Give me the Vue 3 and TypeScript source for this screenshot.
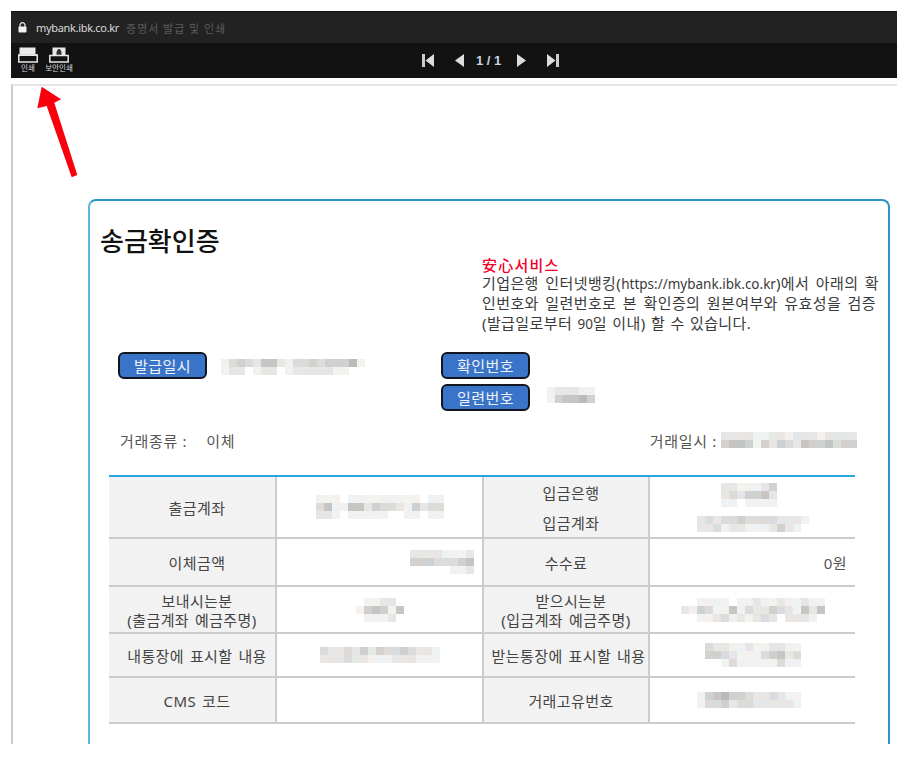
<script setup lang="ts">
type BlurData = { rows: string[] };

const tints = [
  [0, 0, 0],
  [3, 0, -2],
  [-2, 1, 4],
  [0, 2, 0],
  [2, -1, -1],
];

const shade = (ch: string, i: number): string => {
  const level = parseInt(ch, 10);
  if (level === 0) return "transparent";
  const base = 252 - level * 11;
  const t = tints[i % tints.length];
  return `rgb(${base + t[0]},${base + t[1]},${base + t[2]})`;
};

const cells = (d: BlurData) =>
  d.rows.flatMap((r, y) => r.split("").map((c, x) => ({ key: `${x}-${y}`, bg: shade(c, x * 3 + y) })));

const cols = (d: BlurData) => `repeat(${d.rows[0].length}, 8px)`;

const issued: BlurData = { rows: ["134325521334344461", "122012201222221100"] };
const serial: BlurData = { rows: ["122211", "145564"] };
const tradeAt: BlurData = { rows: ["22221122122212222", "45541424325445344"] };

const b: Record<string, BlurData> = {
  acct: { rows: ["1110111111111011", "3511552433214233", "2210111110011011"] },
  amount: { rows: ["22221112", "44433345", "00000112"] },
  sender: { rows: ["011220", "145415", "011120"] },
  myMemo: { rows: ["322324243343221", "222322111222111"] },
  bank: { rows: ["22111240", "23244520", "11011110"] },
  inAcct: { rows: ["23233433332221", "22312211124210"] },
  receiver: { rows: ["001111011211211211", "214311513224321525", "001123121232022210"] },
  theirMemo: { rows: ["322112112211", "443211134523", "001311111311"] },
  txId: { rows: ["14564432232110", "13342332222210"] },
};
</script>

<template>
  <div class="page">
    <div class="chrome">
      <div class="address">
        <svg class="lock" viewBox="0 0 9 11" width="9" height="11">
          <path d="M2 5V3.200a2.500 2.500 0 0 1 5 0V5" fill="none" stroke="#eee" stroke-width="1.2" />
          <rect x="0.5" y="4.6" width="8" height="6" rx="1" fill="#f2f2f2" />
        </svg>
        <span class="host">mybank.ibk.co.kr</span>
        <span class="doc-title">증명서 발급 및 인쇄</span>
      </div>
      <div class="toolbar">
        <div class="tools">
          <div class="tool first">
            <svg viewBox="0 0 20 16" width="20" height="16">
              <rect x="1.500" y="0.5" width="16" height="7" fill="#e8e8e8" />
              <rect x="0.8" y="8" width="18.400" height="7" fill="none" stroke="#e8e8e8" stroke-width="1.5" />
              <rect x="0.5" y="7.500" width="19" height="1.500" fill="#e8e8e8" />
            </svg>
            <span>인쇄</span>
          </div>
          <div class="tool second">
            <svg viewBox="0 0 20 16" width="20" height="16">
              <rect x="3.500" y="0.5" width="13" height="7.500" fill="#e8e8e8" />
              <path d="M7.500 8V5l1.500-3h2l1.500 3v3z" fill="#333" />
              <rect x="0.8" y="8.500" width="18.400" height="6.500" fill="none" stroke="#e8e8e8" stroke-width="1.5" />
            </svg>
            <span>보안인쇄</span>
          </div>
        </div>
        <div class="pager">
          <svg viewBox="0 0 12 13" width="12" height="13">
            <rect x="0" y="0" width="3" height="13" fill="#ccc" />
            <path d="M12 0v13L3.500 6.500z" fill="#ddd" />
          </svg>
          <svg class="prev" viewBox="0 0 10 13" width="10" height="13">
            <path d="M10 0v13L1 6.500z" fill="#ddd" />
          </svg>
          <span class="count">1 / 1</span>
          <svg class="next" viewBox="0 0 10 13" width="10" height="13">
            <path d="M0 0v13l9-6.500z" fill="#ddd" />
          </svg>
          <svg class="last" viewBox="0 0 12 13" width="12" height="13">
            <path d="M0 0v13l8.500-6.500z" fill="#ddd" />
            <rect x="9" y="0" width="3" height="13" fill="#ccc" />
          </svg>
        </div>
      </div>
    </div>

    <div class="sheet">
      <div class="card">
        <h1 class="title">송금확인증</h1>
        <div class="notice">
          <div class="notice-head">安心서비스</div>
          <div>기업은행 인터넷뱅킹(<span class="url">https://mybank.ibk.co.kr</span>)에서 아래의 확</div>
          <div>인번호와 일련번호로 본 확인증의 원본여부와 유효성을 검증</div>
          <div class="notice-last">(발급일로부터 <span class="url">90</span>일 이내) 할 수 있습니다.</div>
        </div>

        <div class="meta">
          <div class="meta-left">
            <span class="pill">발급일시</span>
            <div class="blur issued" :style="{ gridTemplateColumns: cols(issued) }">
              <i v-for="c in cells(issued)" :key="c.key" :style="{ background: c.bg }"></i>
            </div>
          </div>
          <div class="meta-right">
            <span class="pill">확인번호</span>
            <div class="serial-row">
              <span class="pill">일련번호</span>
              <div class="blur serial" :style="{ gridTemplateColumns: cols(serial) }">
                <i v-for="c in cells(serial)" :key="c.key" :style="{ background: c.bg }"></i>
              </div>
            </div>
          </div>
        </div>

        <div class="trade">
          <div class="trade-kind"><span>거래종류 :</span><span class="kind-value">이체</span></div>
          <div class="trade-at">
            <span>거래일시 :</span>
            <div class="blur" :style="{ gridTemplateColumns: cols(tradeAt) }">
              <i v-for="c in cells(tradeAt)" :key="c.key" :style="{ background: c.bg }"></i>
            </div>
          </div>
        </div>

        <table class="detail">
          <colgroup>
            <col class="c-th" /><col class="c-td" /><col class="c-th" /><col class="c-td" />
          </colgroup>
          <tbody>
            <tr class="r1">
              <th class="nudge">출금계좌</th>
              <td><div class="blur" :style="{ gridTemplateColumns: cols(b.acct) }"><i v-for="c in cells(b.acct)" :key="c.key" :style="{ background: c.bg }"></i></div></td>
              <th class="second-th stacked nudge"><div>입금은행</div><div>입금계좌</div></th>
              <td class="stack-cell">
                <div class="blur" :style="{ gridTemplateColumns: cols(b.bank) }"><i v-for="c in cells(b.bank)" :key="c.key" :style="{ background: c.bg }"></i></div>
                <div class="blur" :style="{ gridTemplateColumns: cols(b.inAcct) }"><i v-for="c in cells(b.inAcct)" :key="c.key" :style="{ background: c.bg }"></i></div>
              </td>
            </tr>
            <tr class="r2">
              <th class="nudge">이체금액</th>
              <td class="right"><div class="blur" :style="{ gridTemplateColumns: cols(b.amount) }"><i v-for="c in cells(b.amount)" :key="c.key" :style="{ background: c.bg }"></i></div></td>
              <th class="second-th">수수료</th>
              <td class="right fee">0원</td>
            </tr>
            <tr class="r3">
              <th class="tight nudge">보내시는분<br /><span class="paren">(출금계좌 예금주명)</span></th>
              <td><div class="blur" :style="{ gridTemplateColumns: cols(b.sender) }"><i v-for="c in cells(b.sender)" :key="c.key" :style="{ background: c.bg }"></i></div></td>
              <th class="second-th tight nudge">받으시는분<br /><span class="paren">(입금계좌 예금주명)</span></th>
              <td><div class="blur" :style="{ gridTemplateColumns: cols(b.receiver) }"><i v-for="c in cells(b.receiver)" :key="c.key" :style="{ background: c.bg }"></i></div></td>
            </tr>
            <tr class="r4">
              <th class="nudge">내통장에 표시할 내용</th>
              <td><div class="blur" :style="{ gridTemplateColumns: cols(b.myMemo) }"><i v-for="c in cells(b.myMemo)" :key="c.key" :style="{ background: c.bg }"></i></div></td>
              <th class="second-th nudge-half">받는통장에 표시할 내용</th>
              <td><div class="blur" :style="{ gridTemplateColumns: cols(b.theirMemo) }"><i v-for="c in cells(b.theirMemo)" :key="c.key" :style="{ background: c.bg }"></i></div></td>
            </tr>
            <tr class="r5">
              <th class="nudge">CMS 코드</th>
              <td></td>
              <th class="second-th nudge">거래고유번호</th>
              <td><div class="blur" :style="{ gridTemplateColumns: cols(b.txId) }"><i v-for="c in cells(b.txId)" :key="c.key" :style="{ background: c.bg }"></i></div></td>
            </tr>
          </tbody>
        </table>
      </div>
    </div>

    <svg class="arrow" viewBox="0 0 905 757" width="905" height="757">
      <path d="M41.700 86.700L37.300 108.300L46.700 106L71.700 177.300L77.300 175L54.300 102.700L61 99.300z" fill="#f8000c" />
    </svg>
  </div>
</template>

<style scoped>
.page {
  position: relative;
  width: 905px;
  height: 757px;
  padding-top: 11px;
  box-sizing: border-box;
  background: #fff;
  overflow: hidden;
  font-family: "Noto Sans", "Noto Sans CJK KR", sans-serif;
  color: #333;
}

.chrome {
  margin-left: 11px;
  width: 886px;
  height: 67px;
  display: flex;
  flex-direction: column;
}

.address {
  height: 32px;
  background: #222;
  display: flex;
  align-items: center;
  padding-left: 7px;
  box-sizing: border-box;
  border-top: 1px solid #111;
}

.lock {
  margin-right: 9px;
}

.host {
  font-size: 11px;
  letter-spacing: -0.32px;
  color: #dcdcdc;
}

.doc-title {
  margin-left: 7px;
  font-size: 11px;
  letter-spacing: 0.95px;
  color: #5c5c5c;
}

.toolbar {
  position: relative;
  flex: 1;
  background: #121212;
  display: flex;
  justify-content: center;
  align-items: center;
}

.tools {
  position: absolute;
  left: 0;
  top: 4px;
  display: flex;
}

.tool {
  display: flex;
  flex-direction: column;
  align-items: center;
  color: #d8d8d8;
  font-size: 7.5px;
  line-height: 9px;
  white-space: nowrap;
}

.tool svg {
  margin-bottom: 1px;
}

.tool.first {
  margin-left: 7px;
  width: 20px;
}

.tool.second {
  margin-left: 6px;
  width: 30px;
}

.pager {
  display: flex;
  align-items: center;
  margin-left: 73px;
}

.prev {
  margin-left: 20px;
}

.count {
  margin: 0 16px 0 12px;
  width: 25px;
  text-align: center;
  white-space: nowrap;
  font-size: 13px;
  font-weight: 700;
  color: #c9d4e0;
  font-family: "Liberation Sans", sans-serif;
}

.last {
  margin-left: 20px;
}

.sheet {
  margin: 6px 0 0 11px;
  width: 886px;
  height: 660px;
  box-sizing: border-box;
  border-top: 2px solid #e6e6e6;
  border-left: 2px solid #ccc;
  overflow: hidden;
}

.card {
  margin: 113px 0 0 75px;
  width: 802px;
  height: 600px;
  box-sizing: border-box;
  border: 2px solid #2f95c6;
  border-left-color: #5fb5da;
  border-bottom: none;
  border-radius: 8px 8px 0 0;
}

.title {
  margin: 24px 0 0 10px;
  font-size: 26px;
  line-height: 32px;
  font-weight: 500;
  color: #111;
}

.notice {
  margin-left: 392px;
  font-size: 15px;
  line-height: 20px;
  letter-spacing: 0.4px;
  word-spacing: 2.2px;
  white-space: nowrap;
  color: #3a3a3a;
}

.url {
  font-size: 13.5px;
  line-height: 1;
  letter-spacing: 0;
}

.notice-head {
  line-height: 16px;
  letter-spacing: 1.2px;
  color: #f5002a;
  font-weight: 500;
  font-family: "Noto Sans CJK KR", sans-serif;
}

.notice-last {
  word-spacing: 1px;
}

.meta {
  margin: 19px 0 0 28px;
  display: flex;
}

.meta-left {
  width: 323px;
  display: flex;
  align-items: flex-start;
}

.meta-right {
  display: flex;
  flex-direction: column;
  gap: 5px;
}

.serial-row {
  display: flex;
  align-items: center;
}

.pill {
  box-sizing: border-box;
  width: 89px;
  height: 27px;
  display: flex;
  align-items: center;
  justify-content: center;
  background: #3a74c8;
  border: 2px solid #14161f;
  border-radius: 6px;
  color: #eef3fa;
  font-size: 15px;
  letter-spacing: 0.4px;
}

.blur {
  display: grid;
  grid-auto-rows: 8px;
  width: max-content;
}

.blur i {
  display: block;
}

.issued {
  margin: 7px 0 0 14px;
}

.serial {
  margin: -6px 0 0 17px;
}

.trade {
  margin: 17px 0 0 30px;
  width: 737px;
  height: 24px;
  display: flex;
  align-items: center;
  justify-content: space-between;
  font-size: 15px;
  letter-spacing: 0.7px;
  color: #555;
}

.kind-value {
  margin-left: 19px;
}

.trade-at {
  display: flex;
  align-items: center;
  gap: 4px;
}

.detail {
  margin: 23px 0 0 19px;
  width: 746px;
  table-layout: fixed;
  border-collapse: separate;
  border-spacing: 0;
  border-top: 2px solid #29a6dd;
  font-size: 15px;
  letter-spacing: 0.4px;
  word-spacing: 1.6px;
  color: #444;
}

.c-th {
  width: 168px;
}

.c-td {
  width: 205px;
}

.detail th,
.detail td {
  padding: 0;
  box-sizing: border-box;
  border-bottom: 2px solid #ccc;
  text-align: center;
  vertical-align: middle;
}

.detail th {
  background: #f2f2f2;
  font-weight: 400;
  border-right: 2px solid #ccc;
  white-space: nowrap;
}

.detail th.second-th {
  border-left: 2px solid #ccc;
}

.detail th.nudge {
  padding-left: 10px;
}

.detail th.nudge-half {
  padding-left: 5px;
}

.paren {
  display: inline-block;
  margin-left: -10px;
}

.detail .blur {
  margin: 0 auto;
}

.detail td.right {
  text-align: right;
  padding-right: 8px;
}

.detail td.right .blur {
  margin: 0 0 0 auto;
}

.fee {
  color: #555;
}

.detail th.tight {
  line-height: 19px;
  padding-top: 2px;
}

.stacked div + div {
  margin-top: 9px;
}

.stack-cell .blur + .blur {
  margin-top: 9px;
}

.r1 th,
.r1 td {
  height: 62px;
}

.r2 th,
.r2 td {
  height: 48px;
}

.r3 th,
.r3 td {
  height: 47px;
}

.r4 th,
.r4 td {
  height: 44px;
}

.r5 th,
.r5 td {
  height: 46px;
}

.arrow {
  position: absolute;
  left: 0;
  top: 0;
  pointer-events: none;
}
</style>
